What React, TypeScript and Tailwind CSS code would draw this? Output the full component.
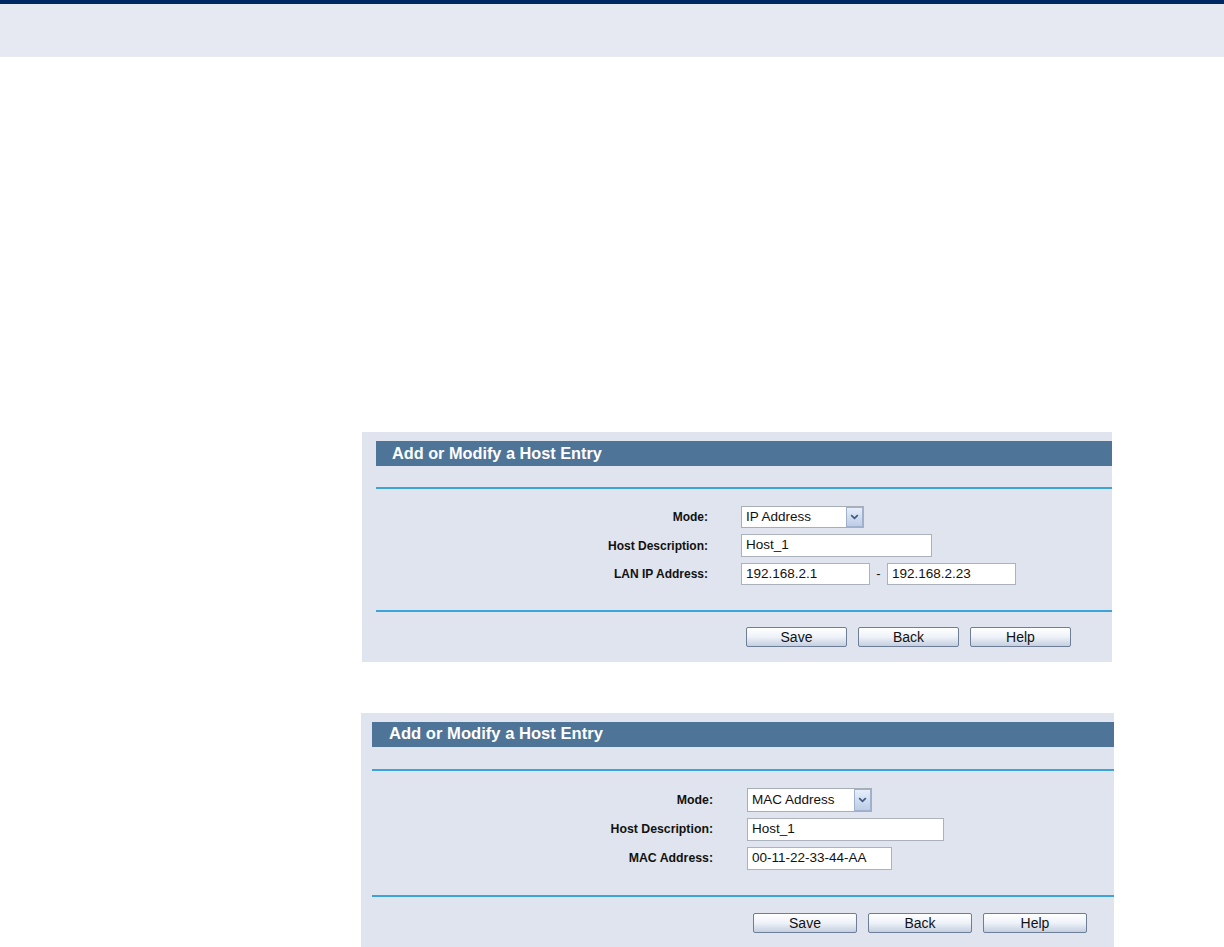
import React from "react";

const FONT = "font-['Liberation_Sans',Arial,Helvetica,sans-serif]";

function Chevron() {
  return (
    <svg width="9" height="6" viewBox="0 0 9 6" className="block">
      <path d="M1.2 1.2 L4.5 4.4 L7.8 1.2" fill="none" stroke="#3f5a86" strokeWidth="1.7" />
    </svg>
  );
}

function Select({ value, w, h }: { value: string; w: string; h: string }) {
  return (
    <div className={`${w} ${h} bg-white border border-[#a7aeb8] flex items-center justify-between text-[13.5px] text-[#111] pl-[4px]`}>
      <span>{value}</span>
      <div className="h-full w-[17px] border border-[#9fb1cc] bg-linear-to-b from-[#e6eefa] to-[#bccde6] flex items-center justify-center">
        <Chevron />
      </div>
    </div>
  );
}

function Input({ value, w, h }: { value: string; w: string; h: string }) {
  return (
    <div className={`${w} ${h} bg-white border border-[#abb2bc] flex items-center text-[13.5px] text-[#111] pl-[4px]`}>
      {value}
    </div>
  );
}

function Btn({ label, w }: { label: string; w: string }) {
  return (
    <div className={`${w} h-[20px] border border-[#6e7e96] rounded-[2px] bg-linear-to-b from-white via-[#eef2f8] to-[#c4cfe0] flex items-center justify-center text-[14px] text-[#111]`}>
      {label}
    </div>
  );
}

function Label({ text, w, size }: { text: string; w: string; size: string }) {
  return <div className={`${w} ${size} text-right font-bold text-[#111]`}>{text}</div>;
}

export default function App() {
  return (
    <div className={`w-[1224px] h-[947px] overflow-hidden bg-white ${FONT}`}>
      <div className="h-[4px] bg-[#002664]" />
      <div className="h-[53px] bg-[#e6e9f2]" />

      {/* Panel 1 */}
      <div className="mt-[375px] ml-[362px] w-[750px] h-[230px] bg-[#dfe4ee] pt-[9px] pl-[14px]">
        <div className="h-[25px] bg-[#4e7498] pl-[16px] flex items-center text-white font-bold text-[16.3px]">
          Add or Modify a Host Entry
        </div>
        <div className="mt-[21px] h-[2px] bg-[#3ba5d9]" />
        <div className="mt-[17px] flex flex-col gap-[6px]">
          <div className="flex items-center h-[22px]">
            <Label text="Mode:" w="w-[332px]" size="text-[12px]" />
            <div className="ml-[33px]">
              <Select value="IP Address" w="w-[123px]" h="h-[22px]" />
            </div>
          </div>
          <div className="flex items-center h-[23px]">
            <Label text="Host Description:" w="w-[332px]" size="text-[12px]" />
            <div className="ml-[33px]">
              <Input value="Host_1" w="w-[191px]" h="h-[23px]" />
            </div>
          </div>
          <div className="flex items-center h-[22px]">
            <Label text="LAN IP Address:" w="w-[332px]" size="text-[12px]" />
            <div className="ml-[33px] flex items-center">
              <Input value="192.168.2.1" w="w-[129px]" h="h-[22px]" />
              <span className="w-[17px] text-center text-[13px] text-[#111]">-</span>
              <Input value="192.168.2.23" w="w-[129px]" h="h-[22px]" />
            </div>
          </div>
        </div>
        <div className="mt-[25px] h-[2px] bg-[#3ba5d9]" />
        <div className="mt-[15px] flex gap-[11px] pl-[370px]">
          <Btn label="Save" w="w-[101px]" />
          <Btn label="Back" w="w-[101px]" />
          <Btn label="Help" w="w-[101px]" />
        </div>
      </div>

      {/* Panel 2 */}
      <div className="mt-[51px] ml-[361px] w-[753px] h-[260px] bg-[#dfe4ee] pt-[9px] pl-[11px]">
        <div className="h-[25px] bg-[#4e7498] pl-[17px] flex items-center text-white font-bold text-[16.6px]">
          Add or Modify a Host Entry
        </div>
        <div className="mt-[22px] h-[2px] bg-[#3ba5d9]" />
        <div className="mt-[17px] flex flex-col gap-[6px]">
          <div className="flex items-center h-[24px]">
            <Label text="Mode:" w="w-[341px]" size="text-[12.3px]" />
            <div className="ml-[34px]">
              <Select value="MAC Address" w="w-[125px]" h="h-[24px]" />
            </div>
          </div>
          <div className="flex items-center h-[23px]">
            <Label text="Host Description:" w="w-[341px]" size="text-[12.3px]" />
            <div className="ml-[34px]">
              <Input value="Host_1" w="w-[197px]" h="h-[23px]" />
            </div>
          </div>
          <div className="flex items-center h-[23px]">
            <Label text="MAC Address:" w="w-[341px]" size="text-[12.3px]" />
            <div className="ml-[34px]">
              <Input value="00-11-22-33-44-AA" w="w-[145px]" h="h-[23px]" />
            </div>
          </div>
        </div>
        <div className="mt-[25px] h-[2px] bg-[#3ba5d9]" />
        <div className="mt-[16px] flex gap-[11px] pl-[381px]">
          <Btn label="Save" w="w-[104px]" />
          <Btn label="Back" w="w-[104px]" />
          <Btn label="Help" w="w-[104px]" />
        </div>
      </div>
    </div>
  );
}
